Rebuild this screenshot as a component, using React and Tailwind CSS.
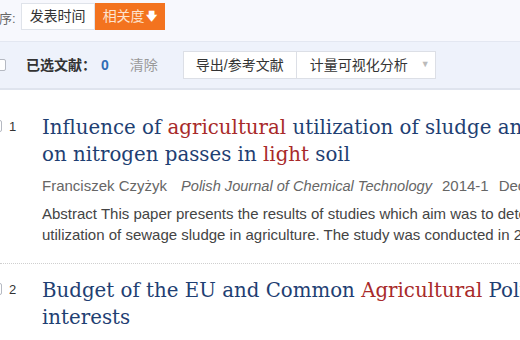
import React from "react";

const cjk = { fontFamily: '"Liberation Sans", "Noto Sans CJK SC", sans-serif' };
const serif = { fontFamily: '"DejaVu Serif", serif' };
const sans = { fontFamily: '"Liberation Sans", sans-serif' };

function Title({ parts }) {
  return (
    <div className="text-[19.8px] leading-[27px] text-[#1f3f73]" style={serif}>
      {parts.map((p, i) =>
        p.hl ? (
          <span key={i} className="text-[#a82a2a]">{p.t}</span>
        ) : (
          <span key={i}>{p.t}</span>
        )
      )}
    </div>
  );
}

export default function App() {
  return (
    <div className="w-[520px] h-[340px] overflow-hidden bg-white" style={cjk}>
      <div className="h-[42px] bg-[#f7f8fd] border-b border-[#e3e7f1] flex items-start pt-[3px]">
        <span className="ml-[-14px] mt-[6px] text-[13px] text-[#666]">排序:</span>
        <div className="ml-[5px] h-[27px] w-[74px] bg-white border border-[#dfe3ea] flex items-center justify-center text-[14px] text-[#333]">
          发表时间
        </div>
        <div className="h-[27px] w-[70px] bg-[#f3731f] flex items-center justify-center text-[14px] text-[#fde3cf]">
          相关度<span className="text-white text-[11px] font-bold ml-[1px]">🡇</span>
        </div>
      </div>
      <div className="h-[48px] bg-[#eef2fb] border-b-2 border-[#dfe4ee] flex items-center">
        <div className="ml-[-6px] w-[12px] h-[12px] border border-[#b5b9c2] rounded-[2px] bg-white"></div>
        <span className="ml-[20px] text-[14px] font-bold text-[#333]">已选文献：</span>
        <span className="ml-[5px] text-[14px] font-bold text-[#2f6db5]">0</span>
        <span className="ml-[21px] text-[14px] text-[#999]">清除</span>
        <div className="ml-[25px] flex h-[28px] bg-white border border-[#dcdfe6]">
          <div className="w-[113px] flex items-center justify-center text-[14px] text-[#333] border-r border-[#dcdfe6]">
            导出/参考文献
          </div>
          <div className="w-[138px] flex items-center text-[14px] text-[#333] pl-[13px]">
            计量可视化分析
            <span className="ml-[13px] text-[#bbb] text-[9px]">▼</span>
          </div>
        </div>
      </div>

      <div className="flex pt-[24px]">
        <div className="w-[42px] flex items-start pt-[6px] shrink-0">
          <div className="ml-[-10px] w-[12px] h-[12px] border border-[#b5b9c2] rounded-[2px]"></div>
          <span className="ml-[7px] text-[13px] text-[#333] leading-[14px]">1</span>
        </div>
        <div className="flex-1 min-w-0 whitespace-nowrap">
          <Title
            parts={[
              { t: "Influence of " },
              { t: "agricultural", hl: true },
              { t: " utilization of sludge and wastes" },
            ]}
          />
          <Title
            parts={[
              { t: "on nitrogen passes in " },
              { t: "light", hl: true },
              { t: " soil" },
            ]}
          />
          <div className="mt-[9px] text-[15px] text-[#666] leading-[18px]" style={sans}>
            Franciszek Czyżyk
            <span className="italic ml-[14px] text-[14.6px]">Polish Journal of Chemical Technology</span>
            <span className="ml-[10px]">2014-1</span>
            <span className="ml-[10px]">December</span>
          </div>
          <div className="mt-[8px] text-[15px] text-[#444] leading-[21px]" style={sans}>
            <div>Abstract This paper presents the results of studies which aim was to determine</div>
            <div>utilization of sewage sludge in agriculture. The study was conducted in 2011</div>
          </div>
        </div>
      </div>

      <div className="mt-[18px] border-t border-dotted border-[#cfcfcf]"></div>

      <div className="flex pt-[13px]">
        <div className="w-[42px] flex items-start pt-[6px] shrink-0">
          <div className="ml-[-10px] w-[12px] h-[12px] border border-[#b5b9c2] rounded-[2px]"></div>
          <span className="ml-[7px] text-[13px] text-[#333] leading-[14px]">2</span>
        </div>
        <div className="flex-1 min-w-0 whitespace-nowrap">
          <Title
            parts={[
              { t: "Budget of the EU and Common " },
              { t: "Agricultural", hl: true },
              { t: " Policy and national" },
            ]}
          />
          <Title parts={[{ t: "interests" }]} />
        </div>
      </div>
    </div>
  );
}
